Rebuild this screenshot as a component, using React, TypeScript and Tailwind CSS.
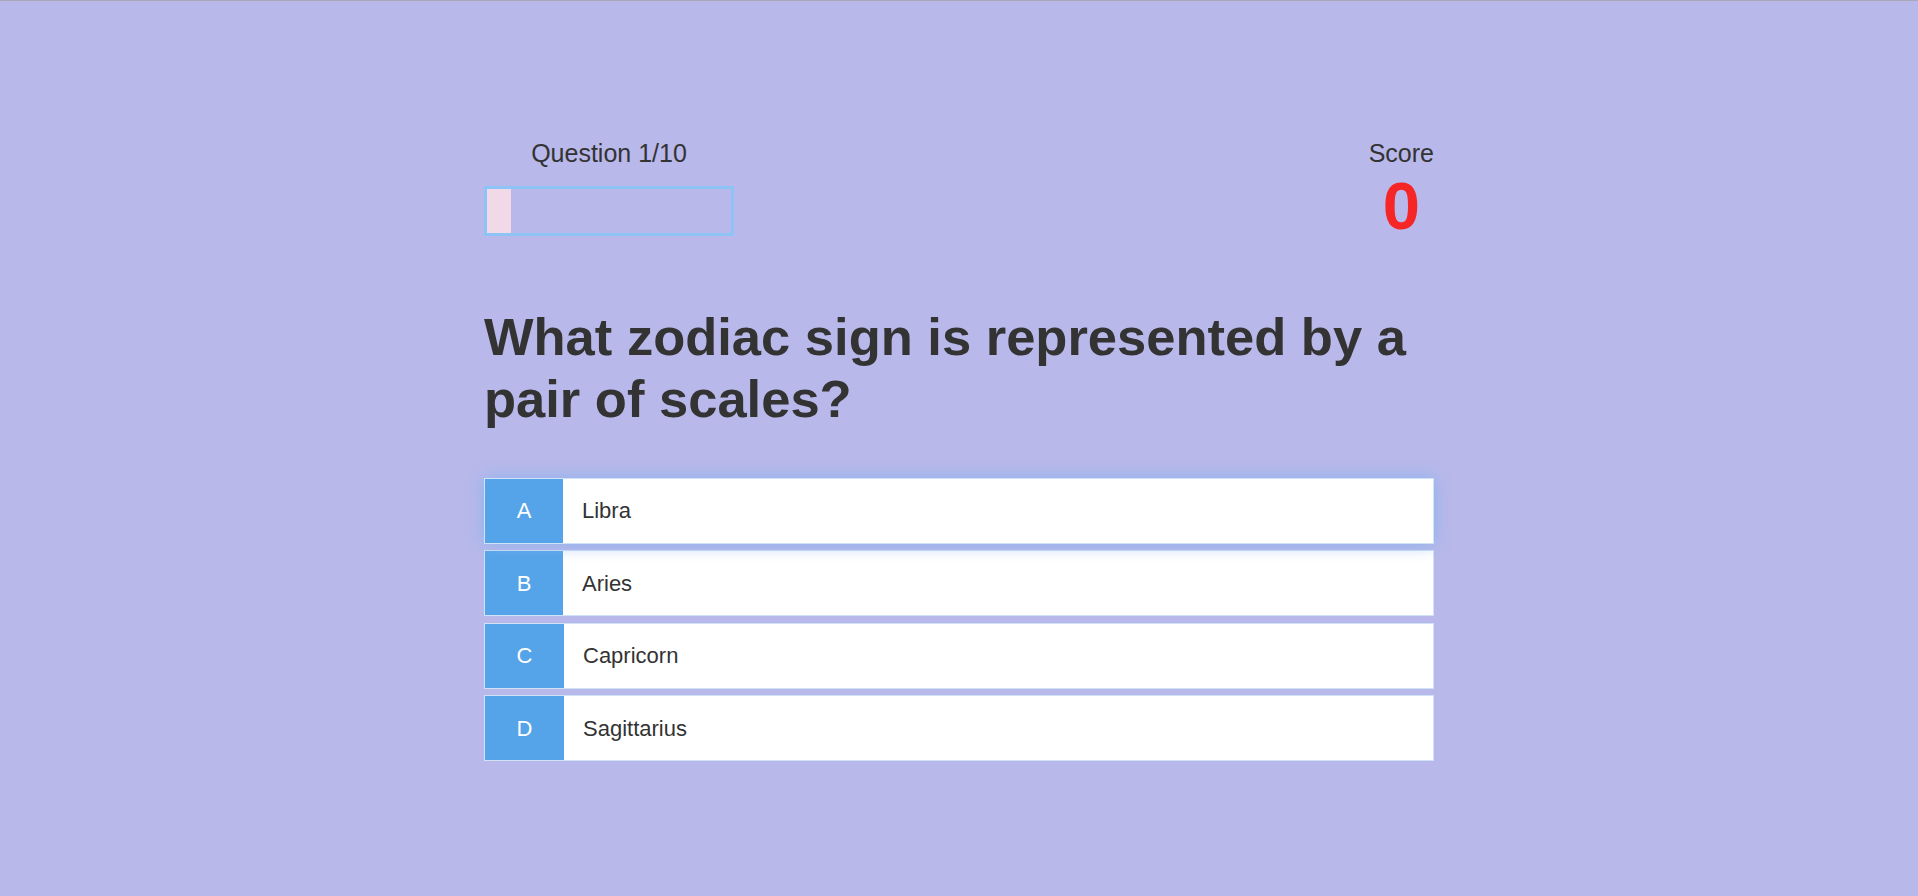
import React, { useState } from "react";

const answers = [
  { letter: "A", text: "Libra" },
  { letter: "B", text: "Aries" },
  { letter: "C", text: "Capricorn" },
  { letter: "D", text: "Sagittarius" },
];

const App = () => {
  const [current] = useState(1);
  const [score] = useState(0);
  const total = 10;
  const [hovered, setHovered] = useState<string>("A");

  return (
    <div
      className="min-h-screen bg-[#b8b8ea] border-t border-[#a9a9b5] text-[#333333]"
      style={{ fontFamily: '"Liberation Sans", Arial, sans-serif' }}
    >
      <div className="w-[950px] mx-auto pt-[138px] pb-[100px]">
        {/* 上部: 進捗とスコア */}
        <div className="flex justify-between items-start">
          <div className="w-[250px] flex flex-col items-center">
            <p className="text-[25px] leading-[28px]">
              Question {current}/{total}
            </p>
            <div className="mt-[19px] w-full h-[50px] border-[3px] border-[#8ec3f5]">
              <div
                className="h-full bg-[#f2d9e8]"
                style={{ width: `${(current / total) * 100}%` }}
              ></div>
            </div>
          </div>
          <div className="flex flex-col items-center">
            <p className="text-[25px] leading-[28px]">Score</p>
            <p className="mt-[5px] text-[67px] leading-none font-bold text-[#f72626]">
              {score}
            </p>
          </div>
        </div>

        <h1 className="mt-[67px] text-[52.5px] leading-[1.19] font-bold">
          What zodiac sign is represented by a pair of scales?
        </h1>

        {/* 選択肢 */}
        <div className="mt-[47px] flex flex-col gap-[6.4px]">
          {answers.map((a, i) => (
            <button
              key={a.letter}
              onMouseEnter={() => setHovered(a.letter)}
              className={
                "flex h-[66px] w-full bg-white border border-[#cfe2f6] text-left cursor-pointer " +
                (hovered === a.letter ? "relative z-10 shadow-[0_0_16px_#8ab4ee]" : "")
              }
            >
              <span
                className={
                  "h-full bg-[#55a3e8] text-white text-[22px] flex items-center justify-center " +
                  (i < 2 ? "w-[78px]" : "w-[79px]")
                }
              >
                {a.letter}
              </span>
              <span className="pl-[19px] h-full flex items-center text-[22px]">
                {a.text}
              </span>
            </button>
          ))}
        </div>
      </div>
    </div>
  );
};

export default App;
